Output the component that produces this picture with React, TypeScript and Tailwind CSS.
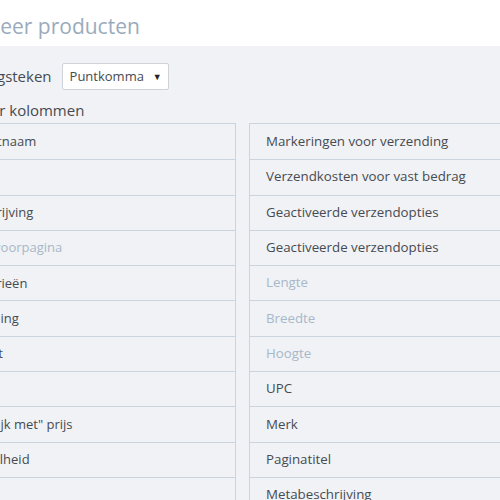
import React from "react";

type Item = { t: string; muted?: boolean };

const left: Item[] = [
  { t: "Productnaam" },
  { t: "SKU" },
  { t: "Omschrijving" },
  { t: "Op de voorpagina", muted: true },
  { t: "Categorieën" },
  { t: "Afbeelding" },
  { t: "Gewicht" },
  { t: "Prijs" },
  { t: "\"Vergelijk met\" prijs" },
  { t: "Hoeveelheid" },
  { t: "Status" },
];

const right: Item[] = [
  { t: "Markeringen voor verzending" },
  { t: "Verzendkosten voor vast bedrag" },
  { t: "Geactiveerde verzendopties" },
  { t: "Geactiveerde verzendopties" },
  { t: "Lengte", muted: true },
  { t: "Breedte", muted: true },
  { t: "Hoogte", muted: true },
  { t: "UPC" },
  { t: "Merk" },
  { t: "Paginatitel" },
  { t: "Metabeschrijving" },
];

function Box({ items, isLeft }: { items: Item[]; isLeft?: boolean }) {
  return (
    <div className="w-[297px] shrink-0 border border-[#c9d4df] bg-[#f1f2f5]">
      {items.map((it, i) => (
        <div
          key={i}
          className={
            "h-[35.3px] flex items-center whitespace-nowrap " +
            (isLeft ? "pl-[14px] text-[13px] " : "pl-[16px] text-[13.3px] ") +
            (i > 0 ? "border-t border-[#c9d4df] " : "") +
            (it.muted ? "text-[#a7b8c9]" : "text-[#464b51]")
          }
        >
          {it.t}
        </div>
      ))}
    </div>
  );
}

export default function App() {
  return (
    <div
      className="w-[500px] h-[500px] overflow-hidden bg-[#f1f2f5]"
      style={{ fontFamily: '"Open Sans", "Noto Sans", sans-serif' }}
    >
      <div className="h-[46px] bg-white flex items-center">
        <div className="ml-[-64px] text-[21px] text-[#9aabbc] whitespace-nowrap leading-none mt-[6px]">
          Exporteer producten
        </div>
      </div>
      <div className="ml-[-61px]">
        <div className="flex items-center h-[27px] mt-[17px] ml-[-1px]">
          <span className="text-[15px] text-[#464b51] whitespace-nowrap">Scheidingsteken</span>
          <div className="ml-[10px] w-[107px] h-[27px] bg-white border border-[#cdd3d9] rounded-[2px] flex items-center justify-between pl-[7px] pr-[6px]">
            <span className="text-[13px] text-[#464b51]">Puntkomma</span>
            <span className="text-[9px] text-[#222]">▼</span>
          </div>
        </div>
        <div className="pl-[2px] mt-[7px] h-[26px] flex items-center text-[15px] text-[#464b51] whitespace-nowrap">
          Selecteer kolommen
        </div>
        <div className="flex gap-[13px]">
          <Box items={left} isLeft />
          <Box items={right} />
        </div>
      </div>
    </div>
  );
}
